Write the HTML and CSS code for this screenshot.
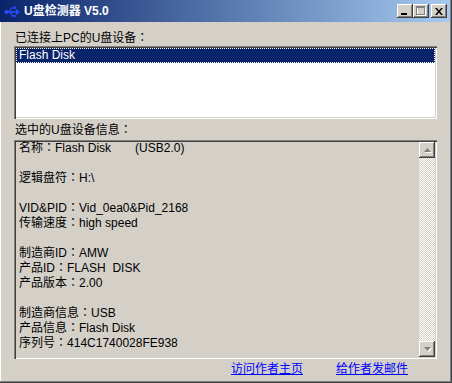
FILE: index.html
```html
<!DOCTYPE html>
<html>
<head>
<meta charset="utf-8">
<link rel="stylesheet" href="styles.css">
</head>
<body>
<div class="window">
  <div class="titlebar">
    <svg class="appicon" width="16" height="12" viewBox="0 0 16 12">
      <circle cx="2.5" cy="6" r="2" fill="#2a4cff"/>
      <line x1="3" y1="6" x2="13" y2="6" stroke="#2a4cff" stroke-width="1.5"/>
      <polygon points="12,3 16,6 12,9" fill="#2a4cff"/>
      <polyline points="5,6 7.5,2 10,2" fill="none" stroke="#2a4cff" stroke-width="1.2"/>
      <rect x="9.5" y="0.5" width="2.5" height="2.5" fill="#2a4cff"/>
      <polyline points="6,6 8.5,10 10,10" fill="none" stroke="#2a4cff" stroke-width="1.2"/>
      <circle cx="10.5" cy="10" r="1.3" fill="#2a4cff"/>
    </svg>
    <span class="title">U盘检测器 V5.0</span>
    <div class="tbtns">
      <span class="tbtn"><span class="minglyph"></span></span>
      <span class="tbtn">
        <svg width="10" height="10" viewBox="0 0 10 10">
          <rect x="1.5" y="1.5" width="8" height="8" fill="none" stroke="#fff"/>
          <rect x="0.5" y="0.5" width="8" height="8" fill="none" stroke="#808080"/>
          <line x1="0" y1="1.5" x2="9" y2="1.5" stroke="#808080"/>
        </svg>
      </span>
      <span class="tbtn close">
        <svg width="8" height="7" viewBox="0 0 8 7">
          <path d="M0 0h2l2 2.5L6 0h2L5 3.5 8 7H6L4 4.5 2 7H0l3-3.5z" fill="#000"/>
        </svg>
      </span>
    </div>
  </div>
  <div class="client">
    <div class="label first">已连接上PC的U盘设备<span class="c">：</span></div>
    <div class="listbox">
      <div class="item selected">Flash Disk</div>
    </div>
    <div class="label second">选中的U盘设备信息<span class="c">：</span></div>
    <div class="infobox">
      <div class="info">
        <div class="ln">名称<span class="c">：</span>Flash Disk<span class="usb">(USB2.0)</span></div>
        <div class="ln"></div>
        <div class="ln">逻辑盘符<span class="c">：</span>H:\</div>
        <div class="ln"></div>
        <div class="ln">VID&amp;PID<span class="c">：</span>Vid_0ea0&amp;Pid_2168</div>
        <div class="ln">传输速度<span class="c">：</span>high speed</div>
        <div class="ln"></div>
        <div class="ln">制造商ID<span class="c">：</span>AMW</div>
        <div class="ln">产品ID<span class="c">：</span>FLASH  DISK</div>
        <div class="ln">产品版本<span class="c">：</span>2.00</div>
        <div class="ln"></div>
        <div class="ln">制造商信息<span class="c">：</span>USB</div>
        <div class="ln">产品信息<span class="c">：</span>Flash Disk</div>
        <div class="ln">序列号<span class="c">：</span>414C1740028FE938</div>
      </div>
      <div class="vscroll">
        <div class="sbtn">
          <svg width="7" height="5" viewBox="0 0 7 5"><polygon points="3.5,0 7,4 0,4" fill="#808080"/></svg>
        </div>
        <div class="track"></div>
        <div class="sbtn">
          <svg width="7" height="5" viewBox="0 0 7 5"><polygon points="0,0 7,0 3.5,4" fill="#808080"/></svg>
        </div>
      </div>
    </div>
    <div class="links">
      <a href="#" class="link">访问作者主页</a>
      <a href="#" class="link">给作者发邮件</a>
    </div>
  </div>
</div>
</body>
</html>
```

FILE: styles.css
```css
html, body {
  margin: 0;
  padding: 0;
  background: #d4d0c8;
}

body {
  font-family: "Liberation Sans", "Noto Sans CJK SC", sans-serif;
  font-size: 12px;
  line-height: 15px;
  color: #000;
}

.c {
  font-family: "Noto Sans CJK JP", "Noto Sans CJK SC", sans-serif;
  line-height: 12px;
}

.window {
  width: 452px;
  height: 383px;
  box-sizing: border-box;
  background: #d4d0c8;
  border-right: 1px solid #404040;
  border-bottom: 1px solid #404040;
  box-shadow: inset -1px -1px #808080, inset 1px 0 #ffffff;
  display: flex;
  flex-direction: column;
}

.titlebar {
  height: 22px;
  margin-right: 1px;
  background: linear-gradient(to right, #0a246a, #a6caf0);
  display: flex;
  align-items: center;
  padding: 0 3px 0 4px;
  color: #fff;
  font-weight: bold;
}

.appicon {
  flex: none;
  margin-top: 1px;
}

.title {
  margin-left: 4px;
  line-height: 14px;
}

.tbtns {
  margin-left: auto;
  display: flex;
  align-items: center;
}

.tbtn {
  width: 16px;
  height: 14px;
  box-sizing: border-box;
  background: #d4d0c8;
  box-shadow: inset -1px -1px #404040, inset 1px 1px #ffffff, inset -2px -2px #808080;
  display: flex;
  align-items: center;
  justify-content: center;
}

.tbtn.close {
  margin-left: 2px;
}

.minglyph {
  width: 6px;
  height: 2px;
  background: #000;
  margin-top: 5px;
  margin-right: 2px;
}

.client {
  flex: 1;
  display: flex;
  flex-direction: column;
  padding: 0 14px 0 14px;
}

.label {
  height: 15px;
  padding-left: 1px;
}

.label.first {
  margin-top: 9px;
}

.label.second {
  margin-top: 4px;
}

.listbox {
  height: 73px;
  box-sizing: border-box;
  background: #fff;
  padding: 2px 2px 2px 2px;
  box-shadow: inset 1px 1px #808080, inset 2px 2px #404040, inset -1px -1px #ffffff, inset -2px -2px #d4d0c8;
}

.item {
  height: 15px;
  box-sizing: border-box;
  padding-left: 2px;
  line-height: 13px;
  border: 1px dotted transparent;
}

.item.selected {
  background: #0a246a;
  color: #fff;
  border-color: #fff;
}

.infobox {
  margin-top: 2px;
  height: 219px;
  box-sizing: border-box;
  padding: 2px;
  display: flex;
  background: #d4d0c8;
  box-shadow: inset 1px 1px #808080, inset 2px 2px #404040, inset -1px -1px #ffffff, inset -2px -2px #d4d0c8;
}

.info {
  flex: 1;
  padding-left: 3px;
  margin-top: -1px;
}

.ln {
  height: 15px;
  white-space: pre;
}

.usb {
  margin-left: 24px;
}

.vscroll {
  width: 16px;
  display: flex;
  flex-direction: column;
}

.sbtn {
  width: 16px;
  height: 16px;
  flex: none;
  box-sizing: border-box;
  background: #d4d0c8;
  box-shadow: inset -1px -1px #404040, inset 1px 1px #ffffff, inset -2px -2px #808080;
  display: flex;
  align-items: center;
  justify-content: center;
}

.sbtn svg {
  filter: drop-shadow(1px 1px 0 #ffffff);
}

.track {
  flex: 1;
  background-image: repeating-conic-gradient(#ffffff 0 25%, #d4d0c8 0 50%);
  background-size: 2px 2px;
}

.links {
  margin-top: 3px;
  display: flex;
  justify-content: flex-end;
  gap: 33px;
  padding-right: 29px;
}

.link {
  color: #0000ff;
  text-decoration: underline;
}
```
